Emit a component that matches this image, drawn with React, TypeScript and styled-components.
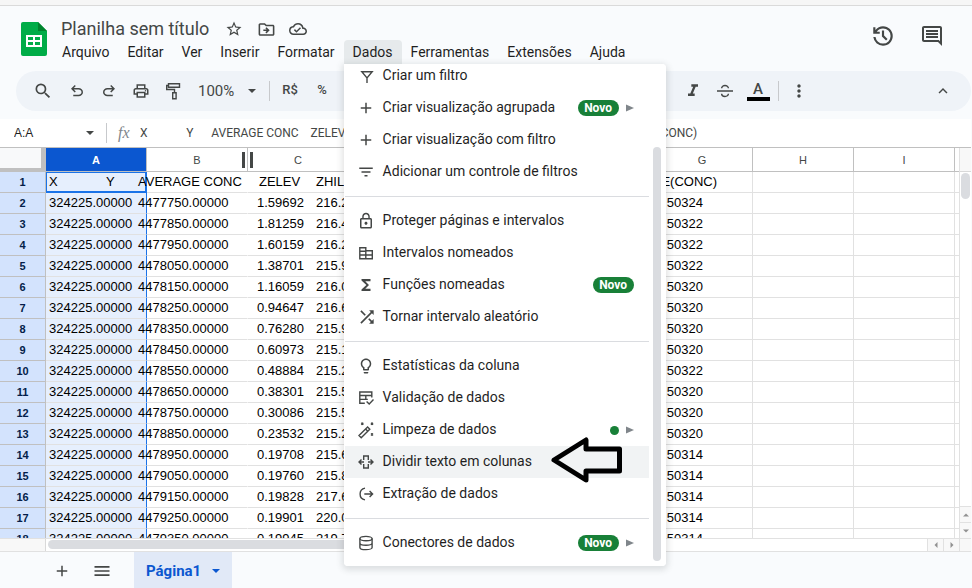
import React from "react";
import styled, { createGlobalStyle, css } from "styled-components";
import {
  MdAdd,
  MdExpandLess,
  MdFilterList,
  MdFormatItalic,
  MdFunctions,
  MdLightbulbOutline,
  MdLockOutline,
  MdMenu,
  MdMoreVert,
  MdOutlineCloudDone,
  MdOutlineComment,
  MdOutlineDriveFileMove,
  MdOutlinePrint,
  MdSearch,
  MdShuffle,
  MdStarBorder,
} from "react-icons/md";

const GlobalStyle = createGlobalStyle`
  * { box-sizing: border-box; }
  body { margin: 0; background: #f9fbfd; }
  button, input { font: inherit; color: inherit; border: 0; padding: 0; margin: 0; background: none; }
`;

const ui = `Roboto, "Open Sans", sans-serif`;
const sheet = `"Liberation Sans", Arial, sans-serif`;

const Page = styled.div`
  display: flex;
  flex-direction: column;
  height: 100vh;
  overflow: hidden;
  color: #1f1f1f;
  font: 14px/20px ${ui};
`;

const WindowEdge = styled.div`
  flex: none;
  height: 6px;
  background: #f6f6f6;
  border-bottom: 1px solid #dadada;
`;

/* Header */
const Header = styled.header`
  flex: none;
  display: flex;
  padding: 12px 27px 7px 21px;
`;

const Logo = styled.svg`
  flex: none;
  width: 26px;
  height: 34px;
  margin: 4px 6px 0 0;
`;

const HeaderMain = styled.div`
  flex: 1;
`;

const TitleRow = styled.div`
  display: flex;
  align-items: center;
  height: 22px;
  padding-left: 8px;
  gap: 12px;
  color: #444746;
`;

const Title = styled.h1`
  margin: 0 3px 0 0;
  font: 400 18px/22px ${ui};
`;

const IconButton = styled.button<{ $size?: number }>`
  flex: none;
  display: grid;
  place-items: center;
  width: ${(p) => p.$size ?? 32}px;
  height: ${(p) => p.$size ?? 32}px;
  color: #444746;
`;

const SearchButton = styled(IconButton)`
  margin-right: 2px;
`;

const MenuBar = styled.nav`
  display: flex;
  height: 24px;
`;

const MenuSlot = styled.div`
  position: relative;
`;

const MenuButton = styled.button<{ $open?: boolean }>`
  height: 24px;
  padding: 0 9px;
  border-radius: 4px 4px 0 0;
  background: ${(p) => (p.$open ? "#e6eaec" : "transparent")};
`;

const HeaderActions = styled.div`
  display: flex;
  gap: 23px;
  padding-top: 5px;
`;

/* Drop-down menu */
const Dropdown = styled.div`
  position: absolute;
  z-index: 5;
  top: 24px;
  left: 0;
  width: 322px;
  background: #fff;
  border-radius: 0 4px 4px 4px;
  box-shadow: 0 2px 6px 2px rgba(60, 64, 67, 0.15);
`;

const DropdownBody = styled.div`
  display: flex;
  padding-bottom: 7px;
  overflow: hidden;
  border-radius: 0 4px 4px 4px;
  background: #fff;
`;

const MenuList = styled.div`
  flex: 1;
  display: flex;
  flex-direction: column;
  margin-top: -4px;
  padding-left: 1px;
`;

const MenuItem = styled.button<{ $active?: boolean }>`
  position: relative;
  display: flex;
  align-items: center;
  height: 32px;
  padding: 0 15px 0 12px;
  text-align: left;
  background: ${(p) => (p.$active ? "#f1f3f4" : "transparent")};
`;

const ItemIcon = styled.span`
  display: grid;
  place-items: center;
  width: 18px;
  margin-right: 8px;
  color: #444746;
`;

const ItemLabel = styled.span`
  flex: 1;
  padding-bottom: 2px;
  white-space: nowrap;
`;

const Badge = styled.span`
  width: 41px;
  height: 16px;
  border-radius: 8px;
  background: #188038;
  color: #fff;
  font: 700 12px/16px ${ui};
  text-align: center;
`;

const Dot = styled.span`
  width: 9px;
  height: 9px;
  border-radius: 50%;
  background: #188038;
`;

const SubArrow = styled.svg`
  width: 8px;
  height: 8px;
  margin-left: 7px;
  fill: #80868b;
`;

const Separator = styled.hr`
  width: 100%;
  margin: 8px 0;
  border: 0;
  border-top: 1px solid #dadce0;
`;

const MenuScroll = styled.div`
  width: 17px;
  padding: 83px 5px 0 4px;
`;

const ScrollThumb = styled.div`
  height: 414px;
  margin-bottom: -2px;
  border-radius: 4px;
  background: #dadce0;
`;

const Pointer = styled.svg`
  position: absolute;
  left: 203px;
  top: -11px;
  width: 76px;
  height: 50px;
  fill: none;
  stroke: #000;
  stroke-width: 5;
  stroke-linejoin: round;
`;

/* Toolbar */
const Toolbar = styled.div`
  flex: none;
  display: flex;
  align-items: center;
  height: 40px;
  margin: 0 1px 8px 16px;
  padding: 0 12px 0 11px;
  border-radius: 20px;
  background: #eff3f8;
  color: #444746;
`;

const ZoomButton = styled.button`
  display: flex;
  align-items: center;
  gap: 14px;
  width: 80px;
  padding-left: 9px;
  font-size: 15px;
`;

const Divider = styled.span`
  flex: none;
  width: 1px;
  height: 20px;
  margin-right: 4px;
  background: #c7c9cc;
`;

const TextTool = styled.button`
  width: 32px;
  height: 32px;
  padding-bottom: 3px;
  font: 500 13px/16px ${ui};
`;

const ToolbarGap = styled.span`
  flex: none;
  width: 339px;
`;

const ColorTool = styled.button`
  display: flex;
  flex-direction: column;
  align-items: center;
  width: 34px;
  margin-right: 3px;
  font: 500 15px/16px ${ui};
`;

const ColorBar = styled.span`
  width: 23px;
  height: 4px;
  background: #000;
`;

const Grow = styled.span`
  flex: 1;
`;

/* Formula bar */
const FormulaBar = styled.div`
  flex: none;
  display: flex;
  align-items: center;
  height: 29px;
  margin-right: 1px;
  background: #fff;
  border-bottom: 1px solid #c0c0c0;
`;

const NameBox = styled.input`
  width: 72px;
  margin-left: 14px;
  font: 12px/16px ${sheet};
`;

const NameArrow = styled.button`
  display: grid;
  width: 8px;
  margin-right: 12px;
  color: #444746;
`;

const Fx = styled.span`
  width: 22px;
  margin-left: 7px;
  color: #80868b;
  font: italic 16px/20px "Liberation Serif", serif;
`;

const FormulaInput = styled.input`
  flex: 1;
  color: #444746;
  font: 12px/16px ${ui};
`;

/* Grid */
const GridArea = styled.main`
  flex: 1;
  min-height: 0;
  display: flex;
  margin-right: 1px;
  background: #fff;
`;

const GridView = styled.div`
  flex: 1;
  min-width: 0;
  overflow: hidden;
`;

const Table = styled.table`
  width: 1056px;
  table-layout: fixed;
  border-collapse: separate;
  border-spacing: 0;
`;

const Col = styled.col<{ $w: number }>`
  width: ${(p) => p.$w}px;
`;

const Corner = styled.td`
  height: 24px;
  padding: 0;
  background: #f8f9fa;
  border-right: 5px solid #c0c0c0;
  border-bottom: 4px solid #c0c0c0;
`;

const ColHead = styled.th<{ $selected?: boolean }>`
  position: relative;
  height: 24px;
  padding: 0;
  border-right: 1px solid #c0c0c0;
  border-bottom: 1px solid #c0c0c0;
  font: 400 11px/16px ${sheet};
  color: #444746;
  ${(p) =>
    p.$selected &&
    css`
      background: #0b57d0;
      color: #fff;
      font-weight: 700;
    `}
`;

const ResizeHandle = styled.span`
  position: absolute;
  z-index: 1;
  right: -6px;
  top: 4px;
  width: 11px;
  height: 16px;
  border: solid #444746;
  border-width: 0 3px;
`;

const RowHead = styled.th`
  height: 21px;
  padding: 0;
  background: #d3e3fd;
  border-right: 1px solid #c0c0c0;
  border-bottom: 1px solid #c0c0c0;
  color: #041e49;
  font: 700 11px/16px ${sheet};
`;

const Cell = styled.td<{ $open?: boolean }>`
  height: 21px;
  padding: 0 3px;
  border-right: 1px solid ${(p) => (p.$open ? "transparent" : "#e1e1e1")};
  border-bottom: 1px solid #e1e1e1;
  color: #000;
  font: 13px/20px ${sheet};
  white-space: nowrap;
`;

const SelectedCell = styled(Cell)<{ $anchor?: boolean }>`
  background: #e6effd;
  border-right-color: #1a73e8;
  ${(p) =>
    p.$anchor &&
    css`
      box-shadow: inset 1px 1px #1a73e8, inset -1px -1px #1a73e8;
      border-bottom-color: #1a73e8;
    `}
`;

const RecordLine = styled.div<{ $head?: boolean }>`
  display: grid;
  grid-template-columns: ${(p) =>
    p.$head ? "57px 32px 121px 57px 40px" : "89px 119px 59px 40px"};
`;

const DateField = styled.div<{ $head?: boolean }>`
  display: flex;
  justify-content: flex-end;
  padding-right: ${(p) => (p.$head ? 32 : 46)}px;
`;

/* Scroll bars */
const VScroll = styled.div`
  flex: none;
  display: flex;
  flex-direction: column;
  width: 12px;
  border-left: 1px solid #e1e1e1;
`;

const VScrollHead = styled.div`
  height: 24px;
  background: #f8f8f8;
  border-bottom: 1px solid #d9d9d9;
`;

const VThumb = styled.div`
  width: 9px;
  height: 26px;
  margin: 1px;
  border-radius: 5px;
  background: #dadce0;
`;

const ScrollButton = styled.button<{ $horizontal?: boolean }>`
  display: grid;
  place-items: center;
  width: ${(p) => (p.$horizontal ? "16px" : "100%")};
  height: ${(p) => (p.$horizontal ? "12px" : "16px")};
  border: 0 solid #e1e1e1;
  border-width: ${(p) => (p.$horizontal ? "0 0 0 1px" : "1px 0 0")};
  background: #f8f8f8;
  color: #919191;
`;

const HScroll = styled.div`
  flex: none;
  display: flex;
  height: 14px;
  margin-right: 1px;
  border: solid #e1e1e1;
  border-width: 1px 0;
  background: #fff;
`;

const HScrollHead = styled.div`
  width: 46px;
  background: #f8f8f8;
  border-right: 1px solid #d9d9d9;
`;

const HThumb = styled.div`
  width: 60%;
  height: 9px;
  margin: 1px 2px;
  border-radius: 5px;
  background: #dadce0;
`;

const ScrollCorner = styled.div`
  width: 12px;
  border-left: 1px solid #e1e1e1;
  background: #f8f8f8;
`;

/* Sheet tabs */
const SheetBar = styled.footer`
  flex: none;
  display: flex;
  height: 36px;
  padding-left: 46px;
`;

const SheetTools = styled.div`
  display: flex;
  gap: 8px;
  width: 88px;
  padding-top: 3px;
`;

const SheetTab = styled.button`
  display: flex;
  align-items: center;
  gap: 11px;
  height: 36px;
  padding: 2px 12px 0;
  background: #e1e9f7;
  color: #0b57d0;
  font: 700 15px/20px ${ui};
`;

const Stroke = styled.svg`
  display: block;
  width: 18px;
  height: 18px;
  fill: none;
  stroke: currentColor;
  stroke-width: 1.4;
`;

const Small = styled.svg<{ $w?: number }>`
  width: ${(p) => p.$w ?? 8}px;
  height: 8px;
  fill: currentColor;
`;

const CaretDown = () => (
  <Small viewBox="0 0 8 8"><path d="M0 2h8L4 6z" /></Small>
);

const glyph = (d: string, size = 18, box = 24) => (
  <svg width={size} height={size} viewBox={`0 0 ${box} ${box}`} fill="currentColor">
    <path d={d} />
  </svg>
);

const undo = glyph("M7 19v-2h7.1q1.575 0 2.738-1T18 13.5 16.838 11 14.1 10H7.8l2.6 2.6L9 14 4 9l5-5 1.4 1.4L7.8 8h6.3q2.425 0 4.163 1.575T20 13.5t-1.737 3.925T14.1 19z");
const redo = glyph("M9.9 19q-2.425 0-4.163-1.575T4 13.5t1.738-3.925T9.9 8h6.3l-2.6-2.6L15 4l5 5-5 5-1.4-1.4 2.6-2.6H9.9q-1.575 0-2.738 1T6 13.5 7.163 16 9.9 17H17v2z");
const history = glyph("M12 21q-3.45 0-6.012-2.287T3.05 13H5.1q.35 2.6 2.312 4.3T12 19q2.925 0 4.963-2.037T19 12t-2.037-4.962T12 5q-1.725 0-3.225.8T6.25 8H9v2H3V4h2v2.35q1.275-1.6 3.113-2.475T12 3q1.875 0 3.513.713t2.85 1.924 1.925 2.85T21 12t-.712 3.513-1.925 2.85-2.85 1.925T12 21m2.8-4.8L11 12.4V7h2v4.6l3.2 3.2z", 26);

const roller = (
  <Stroke viewBox="0 0 18 18">
    <path d="M4.5 1.7h11v3.6h-11zM4.5 3.5H2.7v4h7.8v3M8.7 10.7h3.4v6H8.7z" />
  </Stroke>
);
const strike = (
  <Stroke viewBox="0 0 18 18">
    <path d="M1 9h16M5.6 6.3C5.6 2.6 12.4 2.6 12.4 6.3M5.6 11.7c0 3.7 6.8 3.7 6.8 0" />
  </Stroke>
);

const icons = {
  funnel: <Stroke viewBox="0 0 18 18"><path d="M4.8 4.7h10.4l-5.2 6.2zM10 10v6" /></Stroke>,
  add: <MdAdd size={18} />,
  list: <MdFilterList size={18} />,
  lock: <MdLockOutline size={18} />,
  ranges: <Stroke viewBox="0 0 18 18"><path d="M2.8 3.7h6v3h6.5v8H2.8zM2.8 7.3h6M2.8 11h12.5M8.8 6.7v8" /></Stroke>,
  sigma: <MdFunctions size={18} />,
  shuffle: <MdShuffle size={20} />,
  bulb: <MdLightbulbOutline size={18} />,
  validate: (
    <Stroke viewBox="0 0 18 18"><path d="M14.8 8.6V3H2.8v11.3h5M2.8 6.5h12M2.8 10.4h8M8.8 6.5v3.9M9.6 12.4l2.6 2.6 4.3-4.4" /></Stroke>
  ),
  wand: (
    <Stroke viewBox="0 0 18 18"><path d="M2 14.6l8.6-8.6 2.2 2.2-8.6 8.6zM8.6 8l2.2 2.2M4.3 1.8l2 2m0-2l-2 2M14 1.8l2 2m0-2l-2 2M14 12.6l2 2m0-2l-2 2" /></Stroke>
  ),
  split: (
    <Stroke viewBox="0 0 18 18"><path d="M6.7 6.9V3h4.6v3.9M6.7 11.1V15h4.6v-3.9M7 9H2.2M4.5 6.4L2 9l2.5 2.6M11 9h4.8M13.5 6.4L16 9l-2.5 2.6" /></Stroke>
  ),
  extract: <Stroke viewBox="0 0 18 18"><path d="M8 3.1a6 6 0 0 0 0 11.8M7.3 9h8M12.6 6l3 3-3 3" /></Stroke>,
  database: (
    <Stroke viewBox="0 0 18 18"><ellipse cx="9" cy="4.6" rx="6.1" ry="2.2" /><path d="M2.9 4.6v8.8c0 1.2 2.7 2.2 6.1 2.2s6.1-1 6.1-2.2V4.6M2.9 9c0 1.2 2.7 2.2 6.1 2.2s6.1-1 6.1-2.2" /></Stroke>
  ),
};

type Entry = {
  icon: keyof typeof icons;
  label: string;
  isNew?: boolean;
  dot?: boolean;
  sub?: boolean;
  active?: boolean;
};

const menuGroups: Entry[][] = [
  [
    { icon: "funnel", label: "Criar um filtro" },
    { icon: "add", label: "Criar visualização agrupada", isNew: true, sub: true },
    { icon: "add", label: "Criar visualização com filtro" },
    { icon: "list", label: "Adicionar um controle de filtros" },
  ],
  [
    { icon: "lock", label: "Proteger páginas e intervalos" },
    { icon: "ranges", label: "Intervalos nomeados" },
    { icon: "sigma", label: "Funções nomeadas", isNew: true },
    { icon: "shuffle", label: "Tornar intervalo aleatório" },
  ],
  [
    { icon: "bulb", label: "Estatísticas da coluna" },
    { icon: "validate", label: "Validação de dados" },
    { icon: "wand", label: "Limpeza de dados", dot: true, sub: true },
    { icon: "split", label: "Dividir texto em colunas", active: true },
    { icon: "extract", label: "Extração de dados" },
  ],
  [{ icon: "database", label: "Conectores de dados", isNew: true, sub: true }],
];

const DataMenu = () => (
  <Dropdown role="menu" aria-label="Dados">
    <DropdownBody>
      <MenuList>
        {menuGroups.map((group, i) => (
          <React.Fragment key={i}>
            {i > 0 && <Separator />}
            {group.map((item) => (
              <MenuItem key={item.label} role="menuitem" $active={item.active}>
                <ItemIcon>{icons[item.icon]}</ItemIcon>
                <ItemLabel>{item.label}</ItemLabel>
                {item.isNew && <Badge>Novo</Badge>}
                {item.dot && <Dot />}
                {item.sub && <SubArrow viewBox="0 0 8 8"><path d="M0 0.5v7L8 4z" /></SubArrow>}
                {item.active && (
                  <Pointer viewBox="0 0 76 50">
                    <path d="M6 25L38 5v9h33.5v22H38v9z" />
                  </Pointer>
                )}
              </MenuItem>
            ))}
          </React.Fragment>
        ))}
      </MenuList>
      <MenuScroll><ScrollThumb /></MenuScroll>
    </DropdownBody>
  </Dropdown>
);

const menus = ["Arquivo", "Editar", "Ver", "Inserir", "Formatar", "Dados", "Ferramentas", "Extensões", "Ajuda"];
const columns = ["A", "B", "C", "D", "E", "F", "G", "H", "I", ""];

const records = [
  ["4477750.00000", "1.59692", "216.2", "50324"],
  ["4477850.00000", "1.81259", "216.4", "50322"],
  ["4477950.00000", "1.60159", "216.2", "50322"],
  ["4478050.00000", "1.38701", "215.9", "50322"],
  ["4478150.00000", "1.16059", "216.0", "50320"],
  ["4478250.00000", "0.94647", "216.6", "50320"],
  ["4478350.00000", "0.76280", "215.9", "50320"],
  ["4478450.00000", "0.60973", "215.1", "50320"],
  ["4478550.00000", "0.48884", "215.2", "50322"],
  ["4478650.00000", "0.38301", "215.5", "50320"],
  ["4478750.00000", "0.30086", "215.5", "50320"],
  ["4478850.00000", "0.23532", "215.2", "50320"],
  ["4478950.00000", "0.19708", "215.6", "50314"],
  ["4479050.00000", "0.19760", "215.8", "50314"],
  ["4479150.00000", "0.19828", "217.6", "50314"],
  ["4479250.00000", "0.19901", "220.0", "50314"],
  ["4479350.00000", "0.19945", "219.7", "50314"],
];

const formula =
  "X             Y      AVERAGE CONC    ZELEV   ZHILL    ZFLAG    AVE       GRP       RANK      NET ID   DATE(CONC)";

const OpenCells = () => (
  <>
    {["B", "C", "D", "E", "F"].map((c) => <Cell key={c} $open />)}
  </>
);

const Spreadsheet = () => (
  <Table>
    <colgroup>
      <Col $w={46} />
      {columns.map((c) => <Col key={c} $w={101} />)}
    </colgroup>
    <thead>
      <tr>
        <Corner />
        {columns.map((c) => (
          <ColHead key={c} scope="col" $selected={c === "A"}>
            {c}
            {c === "B" && <ResizeHandle />}
          </ColHead>
        ))}
      </tr>
    </thead>
    <tbody>
      <tr>
        <RowHead scope="row">1</RowHead>
        <SelectedCell $anchor>
          <RecordLine $head>
            <span>X</span><span>Y</span><span>AVERAGE CONC</span><span>ZELEV</span><span>ZHILL</span>
          </RecordLine>
        </SelectedCell>
        <OpenCells />
        <Cell><DateField $head>DATE(CONC)</DateField></Cell>
        <Cell /><Cell /><Cell />
      </tr>
      {records.map(([y, conc, elev, date], i) => (
        <tr key={y}>
          <RowHead scope="row">{i + 2}</RowHead>
          <SelectedCell>
            <RecordLine>
              <span>324225.00000</span><span>{y}</span><span>{conc}</span><span>{elev}</span>
            </RecordLine>
          </SelectedCell>
          <OpenCells />
          <Cell><DateField>{date}</DateField></Cell>
          <Cell /><Cell /><Cell />
        </tr>
      ))}
    </tbody>
  </Table>
);

export default function App() {
  return (
    <Page>
      <GlobalStyle />
      <WindowEdge />
      <Header>
        <Logo viewBox="0 0 26 34">
          <path d="M2 0h15l9 9v23a2 2 0 0 1-2 2H2a2 2 0 0 1-2-2V2a2 2 0 0 1 2-2z" fill="#00ac47" />
          <path d="M17 0l9 9h-9z" fill="#00832d" />
          <path d="M5 13h16v12H5zM7 15v3h5v-3zM14 15v3h5v-3zM7 20v3h5v-3zM14 20v3h5v-3z" fill="#fff" fillRule="evenodd" />
        </Logo>
        <HeaderMain>
          <TitleRow>
            <Title>Planilha sem título</Title>
            <IconButton $size={20} aria-label="Marcar com estrela"><MdStarBorder size={18} /></IconButton>
            <IconButton $size={20} aria-label="Mover"><MdOutlineDriveFileMove size={19} /></IconButton>
            <IconButton $size={20} aria-label="Status do documento"><MdOutlineCloudDone size={18} /></IconButton>
          </TitleRow>
          <MenuBar>
            {menus.map((m) => (
              <MenuSlot key={m}>
                <MenuButton $open={m === "Dados"}>{m}</MenuButton>
                {m === "Dados" && <DataMenu />}
              </MenuSlot>
            ))}
          </MenuBar>
        </HeaderMain>
        <HeaderActions>
          <IconButton $size={26} aria-label="Histórico">{history}</IconButton>
          <IconButton $size={26} aria-label="Comentários"><MdOutlineComment size={24} /></IconButton>
        </HeaderActions>
      </Header>
      <Toolbar>
        <SearchButton aria-label="Pesquisar"><MdSearch size={20} /></SearchButton>
        <IconButton aria-label="Desfazer">{undo}</IconButton>
        <IconButton aria-label="Refazer">{redo}</IconButton>
        <IconButton aria-label="Imprimir"><MdOutlinePrint size={18} /></IconButton>
        <IconButton aria-label="Pintar formatação">{roller}</IconButton>
        <ZoomButton>100%<CaretDown /></ZoomButton>
        <Divider />
        <TextTool>R$</TextTool>
        <TextTool>%</TextTool>
        <ToolbarGap />
        <IconButton aria-label="Itálico"><MdFormatItalic size={20} /></IconButton>
        <IconButton aria-label="Tachado">{strike}</IconButton>
        <ColorTool aria-label="Cor do texto">A<ColorBar /></ColorTool>
        <Divider />
        <IconButton aria-label="Mais"><MdMoreVert size={20} /></IconButton>
        <Grow />
        <IconButton aria-label="Ocultar menus"><MdExpandLess size={18} /></IconButton>
      </Toolbar>
      <FormulaBar>
        <NameBox aria-label="Caixa de nome" defaultValue="A:A" />
        <NameArrow aria-label="Intervalos"><CaretDown /></NameArrow>
        <Divider />
        <Fx>fx</Fx>
        <FormulaInput aria-label="Fórmula" defaultValue={formula} />
      </FormulaBar>
      <GridArea>
        <GridView><Spreadsheet /></GridView>
        <VScroll>
          <VScrollHead />
          <VThumb />
          <Grow />
          <ScrollButton aria-label="Rolar para cima"><Small $w={6} viewBox="0 0 8 8"><path d="M0 6h8L4 2z" /></Small></ScrollButton>
          <ScrollButton aria-label="Rolar para baixo"><Small $w={6} viewBox="0 0 8 8"><path d="M0 2h8L4 6z" /></Small></ScrollButton>
        </VScroll>
      </GridArea>
      <HScroll>
        <HScrollHead />
        <HThumb />
        <Grow />
        <ScrollButton $horizontal aria-label="Rolar para a esquerda"><Small $w={6} viewBox="0 0 8 8"><path d="M6 0v8L2 4z" /></Small></ScrollButton>
        <ScrollButton $horizontal aria-label="Rolar para a direita"><Small $w={6} viewBox="0 0 8 8"><path d="M2 0v8l4-4z" /></Small></ScrollButton>
        <ScrollCorner />
      </HScroll>
      <SheetBar>
        <SheetTools>
          <IconButton aria-label="Adicionar página"><MdAdd size={18} /></IconButton>
          <IconButton aria-label="Todas as páginas"><MdMenu size={20} /></IconButton>
        </SheetTools>
        <SheetTab>Página1<CaretDown /></SheetTab>
      </SheetBar>
    </Page>
  );
}
